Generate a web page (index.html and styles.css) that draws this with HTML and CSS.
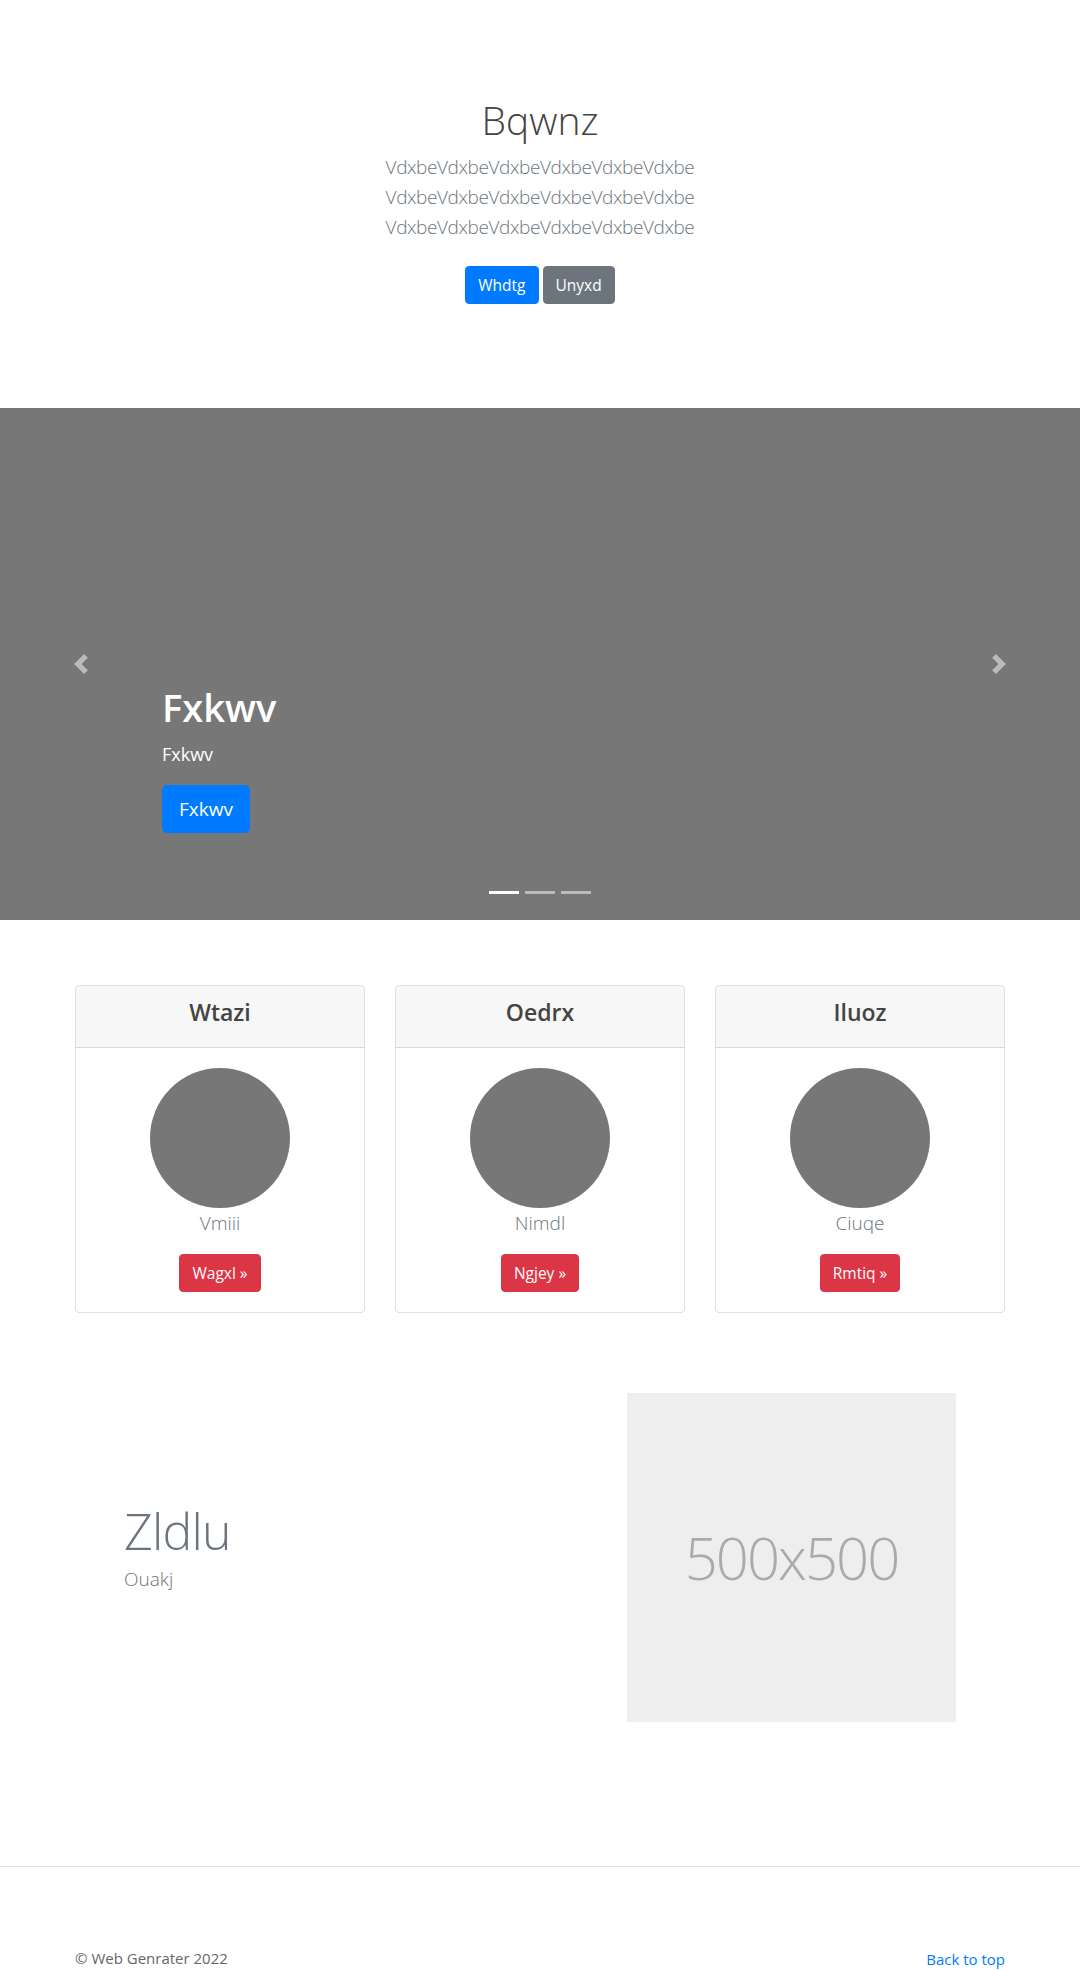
FILE: index.html
```html
<!DOCTYPE html>
<html lang="en">
<head>
<meta charset="utf-8">
<title>Bqwnz</title>
<link rel="stylesheet" href="styles.css">
</head>
<body>
<section class="hero">
  <h1 class="hero-title">Bqwnz</h1>
  <p class="lead hero-lead">VdxbeVdxbeVdxbeVdxbeVdxbeVdxbe VdxbeVdxbeVdxbeVdxbeVdxbeVdxbe VdxbeVdxbeVdxbeVdxbeVdxbeVdxbe</p>
  <div class="hero-actions">
    <a class="btn btn-primary" href="#">Whdtg</a>
    <a class="btn btn-secondary" href="#">Unyxd</a>
  </div>
</section>

<section class="carousel">
  <a class="carousel-control prev" href="#" aria-label="Previous">
    <svg class="control-icon" viewBox="0 0 8 8" width="20" height="20"><path d="M5.25 0l-4 4 4 4 1.5-1.5L4.25 4l2.5-2.5L5.25 0z"/></svg>
  </a>
  <div class="carousel-caption">
    <h1 class="caption-title">Fxkwv</h1>
    <p class="caption-text">Fxkwv</p>
    <p class="caption-action"><a class="btn btn-lg btn-primary" href="#">Fxkwv</a></p>
  </div>
  <a class="carousel-control next" href="#" aria-label="Next">
    <svg class="control-icon" viewBox="0 0 8 8" width="20" height="20"><path d="M2.75 0l-1.5 1.5L3.75 4l-2.5 2.5L2.75 8l4-4-4-4z"/></svg>
  </a>
  <ol class="carousel-indicators">
    <li class="active"></li>
    <li></li>
    <li></li>
  </ol>
</section>

<section class="container cards">
  <div class="card">
    <div class="card-header"><h4 class="card-title">Wtazi</h4></div>
    <div class="card-body">
      <div class="avatar"></div>
      <p class="lead card-lead">Vmiii</p>
      <a class="btn btn-danger" href="#">Wagxl &raquo;</a>
    </div>
  </div>
  <div class="card">
    <div class="card-header"><h4 class="card-title">Oedrx</h4></div>
    <div class="card-body">
      <div class="avatar"></div>
      <p class="lead card-lead">Nimdl</p>
      <a class="btn btn-danger" href="#">Ngjey &raquo;</a>
    </div>
  </div>
  <div class="card">
    <div class="card-header"><h4 class="card-title">Iluoz</h4></div>
    <div class="card-body">
      <div class="avatar"></div>
      <p class="lead card-lead">Ciuqe</p>
      <a class="btn btn-danger" href="#">Rmtiq &raquo;</a>
    </div>
  </div>
</section>

<section class="container featurette">
  <div class="featurette-text">
    <h2 class="featurette-heading">Zldlu</h2>
    <p class="lead featurette-lead">Ouakj</p>
  </div>
  <div class="placeholder"><span>500x500</span></div>
</section>

<hr class="divider">

<footer class="container footer">
  <p class="copyright">&copy; Web Genrater 2022</p>
  <p><a class="top-link" href="#">Back to top</a></p>
</footer>
</body>
</html>
```

FILE: styles.css
```css
* { box-sizing: border-box; }

body {
  margin: 0;
  font-family: "Open Sans", "Noto Sans", "Liberation Sans", sans-serif;
  font-size: 16px;
  line-height: 1.5;
  color: #212529;
  background: #fff;
}

a { text-decoration: none; }

.container {
  width: 930px;
  margin: 0 auto;
}

/* Buttons */
.btn {
  display: inline-block;
  padding: 6px 12px;
  font-size: 15.5px;
  line-height: 24px;
  border: 1px solid transparent;
  border-radius: 4px;
  color: #fff;
  text-align: center;
}
.btn-primary { background: #007bff; border-color: #007bff; }
.btn-secondary { background: #6c757d; border-color: #6c757d; }
.btn-danger { background: #dc3545; border-color: #dc3545; }
.btn-lg {
  padding: 8px 16px;
  font-size: 19px;
  line-height: 30px;
  border-radius: 5px;
}

.lead {
  font-size: 19px;
  font-weight: 300;
  line-height: 30px;
}

/* Hero */
.hero {
  padding: 96px 0 96px;
  text-align: center;
}
.hero-title {
  margin: 0 0 8px;
  font-size: 39px;
  line-height: 48px;
  font-weight: 300;
  color: #444;
}
.hero-lead {
  width: 540px;
  margin: 0 auto 16px;
  color: #6c757d;
  letter-spacing: -0.4px;
}
.hero-actions {
  display: flex;
  justify-content: center;
  gap: 4px;
  padding: 8px 0;
}

/* Carousel */
.carousel {
  position: relative;
  height: 512px;
  background: #777;
}
.carousel-control {
  position: absolute;
  top: 0;
  bottom: 0;
  width: 15%;
  display: flex;
  align-items: center;
  justify-content: center;
  opacity: .5;
}
.carousel-control.prev { left: 0; }
.carousel-control.next { right: 0; }
.control-icon { fill: #fff; display: block; }

.carousel-caption {
  position: absolute;
  left: 15%;
  right: 15%;
  bottom: 51px;
  padding: 20px 0;
  color: #fff;
  text-align: left;
}
.caption-title {
  margin: 0 0 8px;
  font-size: 38px;
  line-height: 48px;
  font-weight: 600;
}
.caption-text {
  margin: 0 0 16px;
  font-size: 18px;
  line-height: 30px;
}
.caption-action { margin: 0 0 16px; }

.carousel-indicators {
  position: absolute;
  left: 15%;
  right: 15%;
  bottom: 0;
  margin: 0 0 16px;
  padding: 0;
  list-style: none;
  display: flex;
  justify-content: center;
}
.carousel-indicators li {
  width: 30px;
  height: 3px;
  margin: 0 3px;
  box-sizing: content-box;
  border-top: 10px solid transparent;
  border-bottom: 10px solid transparent;
  background: #fff;
  background-clip: padding-box;
  opacity: .5;
}
.carousel-indicators li.active { opacity: 1; }

/* Cards */
.cards {
  display: grid;
  grid-template-columns: repeat(3, 290px);
  gap: 30px;
  padding-top: 65px;
}
.card {
  border: 1px solid rgba(0, 0, 0, .125);
  border-radius: 4px;
  overflow: hidden;
}
.card-header {
  padding: 12px 20px;
  background: rgba(0, 0, 0, .03);
  border-bottom: 1px solid rgba(0, 0, 0, .125);
}
.card-title {
  margin: 0 0 8px;
  font-size: 23px;
  line-height: 29px;
  font-weight: 600;
  color: #444;
  text-align: center;
}
.card-body {
  padding: 20px;
  text-align: center;
}
.avatar {
  width: 140px;
  height: 140px;
  margin: 0 auto;
  border-radius: 50%;
  background: #777;
}
.card-lead {
  margin: 0 0 16px;
  color: #6c757d;
}

/* Featurette */
.featurette {
  display: grid;
  grid-template-columns: 1fr 329px;
  align-items: center;
  padding: 0 49px;
  margin-top: 80px;
}
.featurette-heading {
  margin: 0 0 8px;
  font-size: 50px;
  line-height: 1;
  font-weight: 300;
  letter-spacing: -0.8px;
  color: #6c757d;
}
.featurette-lead {
  margin: 0 0 16px;
  color: #6c757d;
}
.placeholder {
  width: 329px;
  height: 329px;
  background: #eee;
  display: flex;
  align-items: center;
  justify-content: center;
}
.placeholder span {
  font-size: 58px;
  font-weight: 300;
  color: #aaa;
  letter-spacing: -2px;
}

/* Footer */
.divider {
  margin: 144px 0 80px;
  border: 0;
  border-top: 1px solid rgba(0, 0, 0, .1);
}
.footer {
  display: flex;
  justify-content: space-between;
}
.footer p { margin: 0 0 16px; }
.copyright { color: #666; font-size: 15px; }
.top-link { color: #007bff; font-size: 15px; }
```
